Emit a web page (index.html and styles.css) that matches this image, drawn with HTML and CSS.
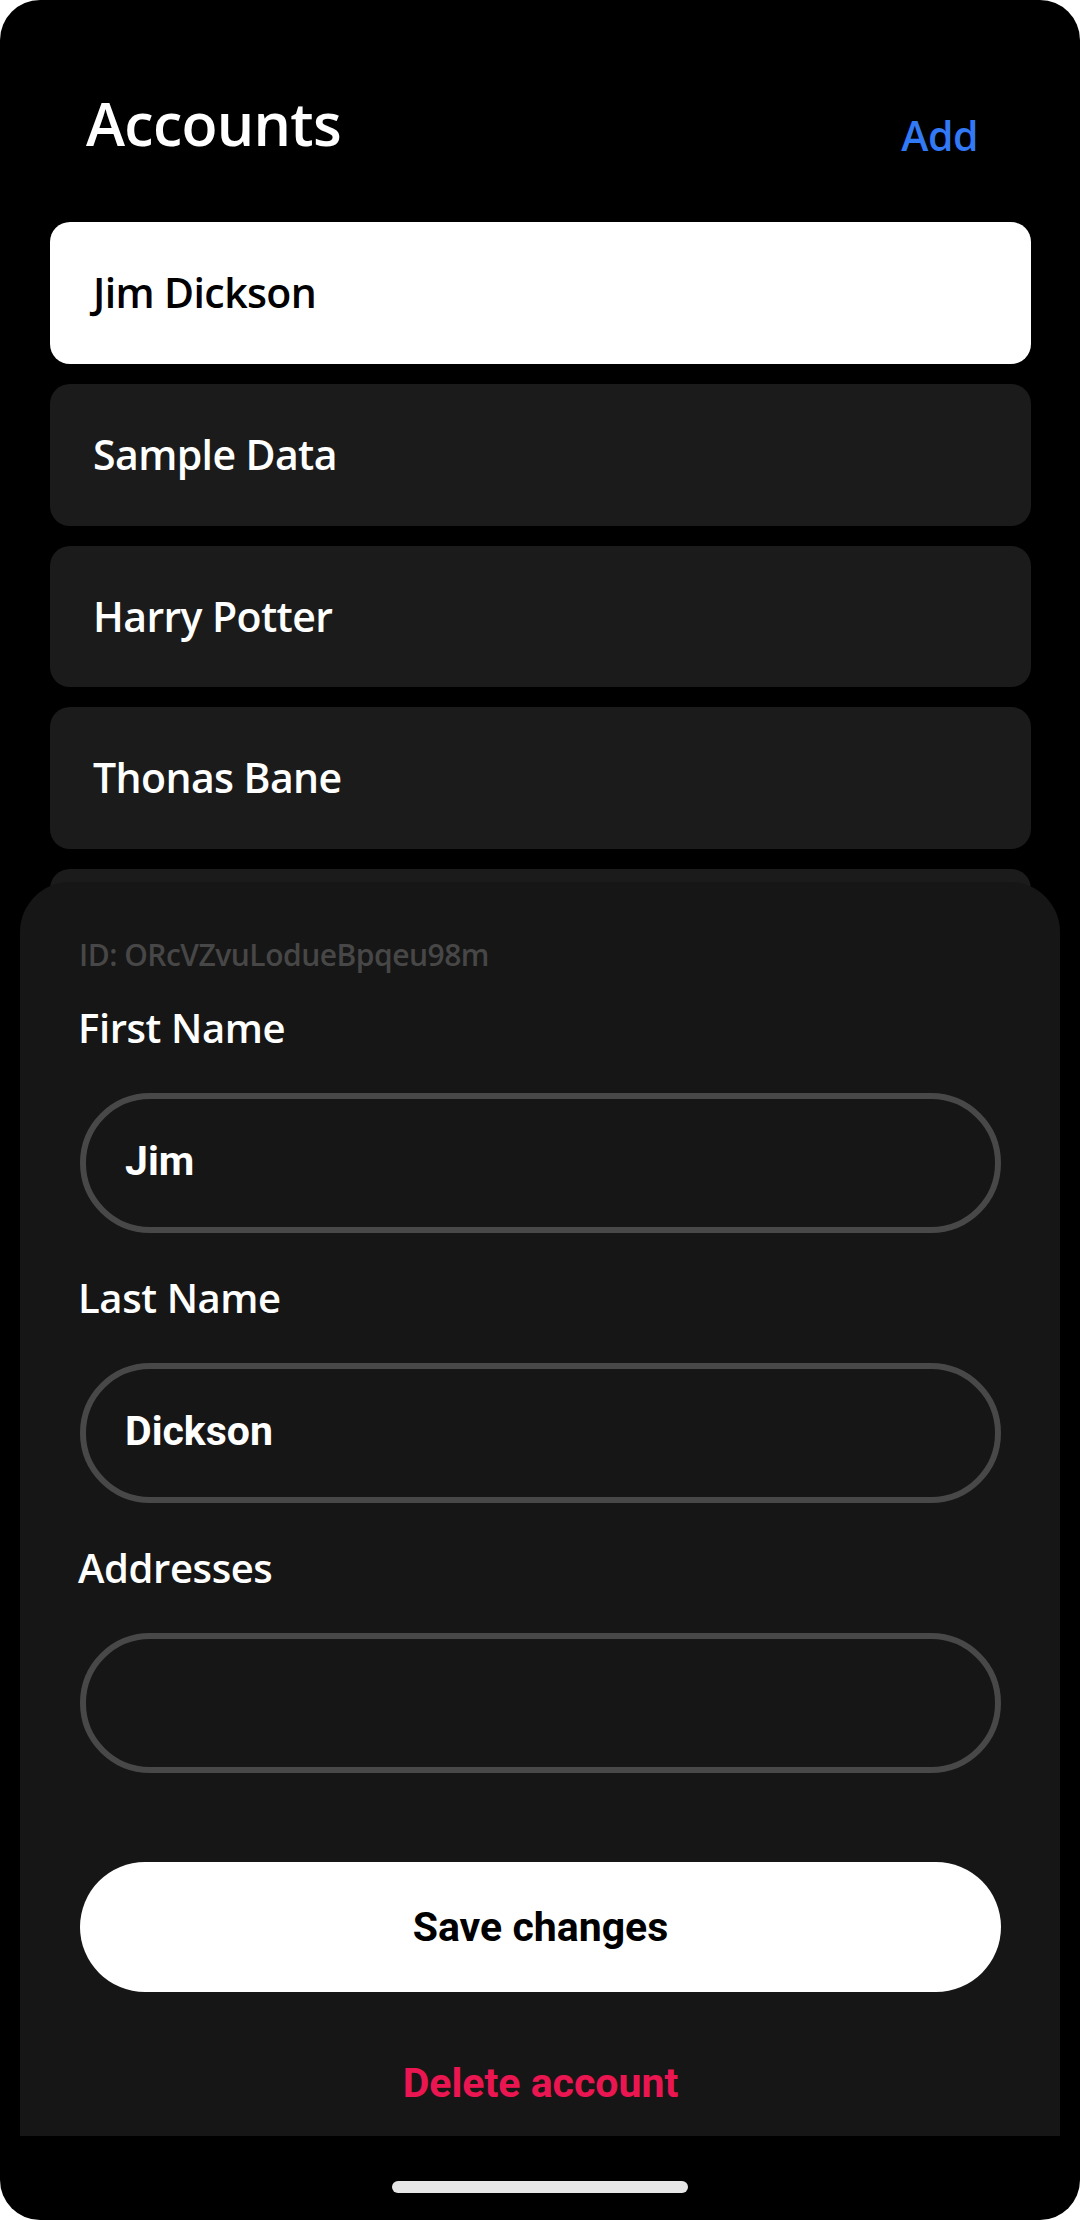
FILE: index.html
```html
<!DOCTYPE html>
<html lang="en">
<head>
<meta charset="utf-8">
<title>Accounts</title>
<link rel="stylesheet" href="styles.css">
</head>
<body>
<div class="phone">
  <header class="header">
    <h1 class="title">Accounts</h1>
    <span class="add">Add</span>
  </header>
  <main class="list">
    <div class="card card-active">Jim Dickson</div>
    <div class="card">Sample Data</div>
    <div class="card">Harry Potter</div>
    <div class="card">Thonas Bane</div>
    <div class="card"></div>
  </main>
  <section class="sheet">
    <div class="sheet-id">ID: ORcVZvuLodueBpqeu98m</div>
    <div class="field">
      <div class="label">First Name</div>
      <div class="input">Jim</div>
    </div>
    <div class="field">
      <div class="label">Last Name</div>
      <div class="input">Dickson</div>
    </div>
    <div class="field">
      <div class="label">Addresses</div>
      <div class="input"></div>
    </div>
    <div class="save">Save changes</div>
    <div class="delete">Delete account</div>
  </section>
  <nav class="navbar"><div class="home-indicator"></div></nav>
</div>
</body>
</html>
```
FILE: styles.css
```css
* { box-sizing: border-box; margin: 0; padding: 0; }
html, body { background: #ffffff; }
body { width: 1080px; height: 2220px; overflow: hidden; }

.phone {
  position: relative;
  width: 1080px;
  height: 2220px;
  background: #000;
  border-radius: 40px;
  overflow: hidden;
  display: flex;
  flex-direction: column;
  font-family: "Open Sans", "Noto Sans", sans-serif;
  font-weight: 600;
  color: #fff;
}

.header {
  display: flex;
  justify-content: space-between;
  align-items: flex-start;
  padding: 83px 102px 0 86px;
}
.title {
  font-size: 59px;
  font-weight: 600;
  line-height: 80px;
  letter-spacing: -0.7px;
}
.add {
  margin-top: 22px;
  font-size: 41px;
  font-weight: 600;
  line-height: 60px;
  letter-spacing: -0.5px;
  color: #3179f5;
}

.list {
  flex: 1;
  display: flex;
  flex-direction: column;
  gap: 20px;
  margin: 57px 49px 0 50px;
  overflow: hidden;
}
.card {
  flex: none;
  height: 141.75px;
  border-radius: 20px;
  background: #1b1b1b;
  padding-left: 43px;
  font-size: 41px;
  line-height: 141.75px;
  letter-spacing: -0.6px;
  color: #fff;
}
.card-active {
  background: #fff;
  color: #000;
}

.sheet {
  position: absolute;
  left: 20px;
  top: 882px;
  width: 1040px;
  height: 1254px;
  background: #161616;
  border-radius: 50px 50px 0 0;
  padding: 52px 59px 0 60px;
  display: flex;
  flex-direction: column;
}
.sheet-id {
  font-size: 30px;
  line-height: 42px;
  color: #474747;
  margin-left: -1px;
  letter-spacing: -0.5px;
}
.field {
  display: flex;
  flex-direction: column;
  gap: 39px;
  margin-top: 26px;
}
.field + .field { margin-top: 39px; }
.label {
  font-size: 40px;
  line-height: 52px;
  color: #fff;
  margin-left: -2px;
  letter-spacing: -0.4px;
}
.input {
  height: 140px;
  border: 6px solid #484848;
  border-radius: 70px;
  padding-left: 39px;
  font-family: Roboto, "Noto Sans", sans-serif;
  font-weight: 700;
  font-size: 41px;
  line-height: 124px;
  color: #fff;
}

.save {
  margin-top: 89px;
  height: 130px;
  border-radius: 65px;
  background: #fff;
  color: #000;
  font-family: Roboto, "Noto Sans", sans-serif;
  font-weight: 700;
  font-size: 41px;
  line-height: 130px;
  text-align: center;
}
.delete {
  margin-top: 61px;
  font-family: Roboto, "Noto Sans", sans-serif;
  font-weight: 700;
  font-size: 41px;
  line-height: 60px;
  text-align: center;
  color: #eb1651;
}

.navbar {
  flex: none;
  height: 84px;
  display: flex;
  justify-content: center;
  padding-top: 45px;
}
.home-indicator {
  width: 296px;
  height: 12px;
  border-radius: 6px;
  background: #e6e6e6;
}
```
